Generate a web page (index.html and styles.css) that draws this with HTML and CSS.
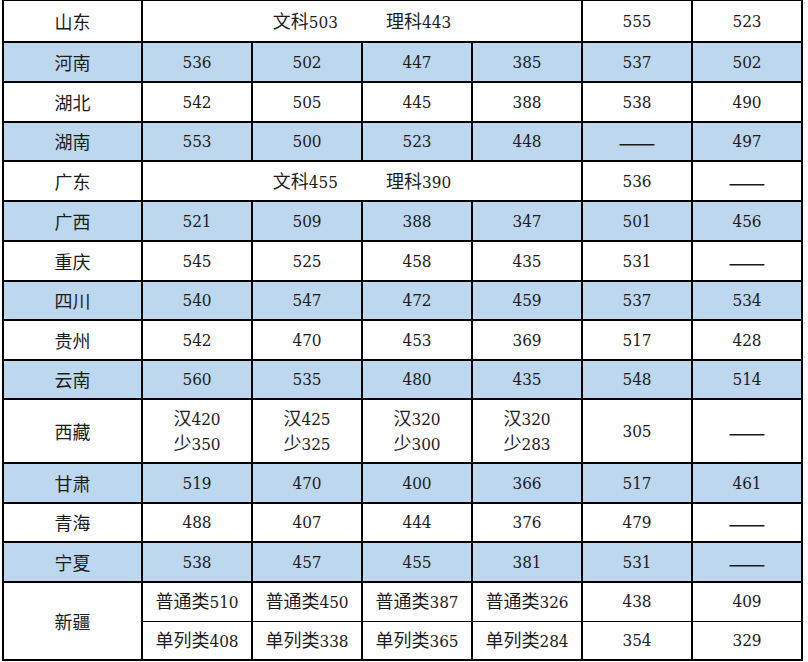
FILE: index.html
```html
<!DOCTYPE html>
<html>
<head>
<meta charset="utf-8">
<title>分数线</title>
<link rel="stylesheet" href="styles.css">
</head>
<body>
<table class="score">
<colgroup>
<col class="c-prov"><col class="c-num"><col class="c-num"><col class="c-num"><col class="c-num"><col class="c-num"><col class="c-num">
</colgroup>
<tbody>
<tr class="first"><td>山东</td><td colspan="4"><span class="pair"><span>文科<span class="n">503</span></span><span>理科<span class="n">443</span></span></span></td><td class="n">555</td><td class="n">523</td></tr>
<tr class="r40 blue"><td>河南</td><td class="n">536</td><td class="n">502</td><td class="n">447</td><td class="n">385</td><td class="n">537</td><td class="n">502</td></tr>
<tr class="r40"><td>湖北</td><td class="n">542</td><td class="n">505</td><td class="n">445</td><td class="n">388</td><td class="n">538</td><td class="n">490</td></tr>
<tr class="r39 blue"><td>湖南</td><td class="n">553</td><td class="n">500</td><td class="n">523</td><td class="n">448</td><td class="dash">——</td><td class="n">497</td></tr>
<tr class="r40"><td>广东</td><td colspan="4"><span class="pair"><span>文科<span class="n">455</span></span><span>理科<span class="n">390</span></span></span></td><td class="n">536</td><td class="dash">——</td></tr>
<tr class="r40 blue"><td>广西</td><td class="n">521</td><td class="n">509</td><td class="n">388</td><td class="n">347</td><td class="n">501</td><td class="n">456</td></tr>
<tr class="r40"><td>重庆</td><td class="n">545</td><td class="n">525</td><td class="n">458</td><td class="n">435</td><td class="n">531</td><td class="dash">——</td></tr>
<tr class="r39 blue"><td>四川</td><td class="n">540</td><td class="n">547</td><td class="n">472</td><td class="n">459</td><td class="n">537</td><td class="n">534</td></tr>
<tr class="r40"><td>贵州</td><td class="n">542</td><td class="n">470</td><td class="n">453</td><td class="n">369</td><td class="n">517</td><td class="n">428</td></tr>
<tr class="r39 blue"><td>云南</td><td class="n">560</td><td class="n">535</td><td class="n">480</td><td class="n">435</td><td class="n">548</td><td class="n">514</td></tr>
<tr class="r64"><td>西藏</td><td>汉<span class="n">420</span><br>少<span class="n">350</span></td><td>汉<span class="n">425</span><br>少<span class="n">325</span></td><td>汉<span class="n">320</span><br>少<span class="n">300</span></td><td>汉<span class="n">320</span><br>少<span class="n">283</span></td><td class="n">305</td><td class="dash">——</td></tr>
<tr class="r40 blue"><td>甘肃</td><td class="n">519</td><td class="n">470</td><td class="n">400</td><td class="n">366</td><td class="n">517</td><td class="n">461</td></tr>
<tr class="r39"><td>青海</td><td class="n">488</td><td class="n">407</td><td class="n">444</td><td class="n">376</td><td class="n">479</td><td class="dash">——</td></tr>
<tr class="r40 blue"><td>宁夏</td><td class="n">538</td><td class="n">457</td><td class="n">455</td><td class="n">381</td><td class="n">531</td><td class="dash">——</td></tr>
<tr class="r39 split-top"><td rowspan="2">新疆</td><td>普通类<span class="n">510</span></td><td>普通类<span class="n">450</span></td><td>普通类<span class="n">387</span></td><td>普通类<span class="n">326</span></td><td class="n">438</td><td class="n">409</td></tr>
<tr class="r39 split-bottom"><td>单列类<span class="n">408</span></td><td>单列类<span class="n">338</span></td><td>单列类<span class="n">365</span></td><td>单列类<span class="n">284</span></td><td class="n">354</td><td class="n">329</td></tr>
</tbody>
</table>
</body>
</html>
```

FILE: styles.css
```css
html, body {
  margin: 0;
  padding: 0;
  background: #ffffff;
}

.score {
  border-collapse: collapse;
  table-layout: fixed;
  width: 799px;
  margin: -1px 0 0 2px;
  font-family: "Noto Sans CJK SC", sans-serif;
  font-size: 18px;
  color: #1c1c1c;
}

.n {
  font-family: "DejaVu Serif", serif;
  font-stretch: condensed;
  font-size: 17px;
}

.dash {
  font-family: "Noto Sans CJK SC", sans-serif;
  font-size: 22px;
}

.c-prov { width: 139px; }
.c-num { width: 110px; }

.score td {
  border: 2px solid #000;
  padding: 0;
  text-align: center;
  vertical-align: middle;
  line-height: 23px;
  white-space: nowrap;
}

.r40 { height: 40px; }
.r39 { height: 39px; }
.r64 { height: 64px; }
.first { height: 42px; }

.blue td { background: #bdd7ee; }

.pair {
  display: inline-flex;
  gap: 48px;
}

.split-top td { border-bottom-width: 1px; }
.split-bottom td { border-top-width: 1px; }
.split-top td[rowspan] { border-bottom-width: 2px; }
```
